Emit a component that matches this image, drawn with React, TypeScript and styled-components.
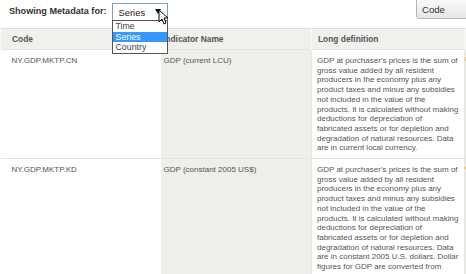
import styled, { createGlobalStyle } from 'styled-components';

const GlobalStyle = createGlobalStyle`
    html, body {
        margin: 0;
        padding: 0;
        background: #ffffff;
        overflow: hidden;
    }
    body {
        font-family: 'Liberation Sans', Arial, sans-serif;
    }
`;

const Page = styled.div`
    width: 466px;
    height: 274px;
    overflow: hidden;
    position: relative;
`;

const TopBar = styled.div`
    display: flex;
    align-items: flex-start;
    height: 28px;
`;

const Title = styled.div`
    font-size: 9.1px;
    font-weight: bold;
    color: #333;
    padding: 6px 0 0 9px;
    transform: scaleY(1.06);
`;

const SelectWrap = styled.div`
    position: relative;
    margin: 3px 0 0 5px;
    z-index: 2;
`;

const SelectBox = styled.div`
    width: 48px;
    height: 16px;
    border: 1px solid #7f9db9;
    background: #fff;
    font-size: 9.4px;
    color: #222;
    padding-left: 6px;
    box-sizing: content-box;
    display: flex;
    align-items: center;
    position: relative;
`;

const Arrow = styled.span`
    position: absolute;
    right: 6px;
    top: 5px;
    width: 0;
    height: 0;
    border-left: 3px solid transparent;
    border-right: 3px solid transparent;
    border-top: 5px solid #111;
`;

const Cursor = styled.svg`
    position: absolute;
    left: 46px;
    top: 6px;
`;

const OptionList = styled.ul`
    position: absolute;
    top: 17px;
    left: 0;
    width: 54px;
    margin: 0;
    padding: 0;
    list-style: none;
    border: 1px solid #555;
    background: #fff;
`;

const Option = styled.li<{ $active?: boolean }>`
    font-size: 8.8px;
    line-height: 10.5px;
    padding-left: 3px;
    color: ${p => (p.$active ? '#fff' : '#444')};
    background: ${p => (p.$active ? '#3399ff' : '#fff')};
`;

const SortBox = styled.div`
    margin: -2px -10px 0 auto;
    width: 60px;
    height: 21px;
    border: 1px solid #b5b5b5;
    border-radius: 0 0 0 3px;
    background: linear-gradient(#fafafa, #e6e6e6);
    font-size: 9.6px;
    color: #333;
    padding: 5px 0 0 5px;
    box-sizing: border-box;
`;

const Table = styled.table`
    border-collapse: collapse;
    table-layout: fixed;
    width: 480px;
    border-top: 1px solid #dcdcd8;
`;

const HeadCell = styled.th<{ $w: number; $pad: number }>`
    width: ${p => p.$w}px;
    height: 21px;
    background: #f0f0ed;
    text-align: left;
    font-size: 8.4px;
    font-weight: bold;
    color: #555;
    padding: 0 0 0 ${p => p.$pad}px;
    border-left: 1px solid #fafaf8;
    box-sizing: border-box;
`;

const Row = styled.tr`
    border-top: 1px solid #e4e4e0;
`;

const Cell = styled.td<{ $shade?: boolean; $pad: number }>`
    vertical-align: top;
    background: ${p => (p.$shade ? '#eeeeea' : '#ffffff')};
    padding: 6px 0 5px ${p => p.$pad}px;
    font-size: 8px;
    color: #555;
    overflow: hidden;
    white-space: nowrap;
`;

const DefCell = styled.td`
    vertical-align: top;
    background: #ffffff;
    padding: 6px 0 5px 5px;
    font-size: 8px;
    color: #555;
    overflow: hidden;
    border-left: 1px solid #e4e4e0;
    border-right: 1px solid #e4e4e0;
`;

const Line = styled.span`
    display: block;
    line-height: 9.7px;
    white-space: nowrap;
`;

const Mark = styled.span`
    display: block;
    width: 3px;
    height: 4px;
    margin-top: 1px;
    background: #f2c230;
    border-radius: 1px;
`;

const rows = [
    {
        code: 'NY.GDP.MKTP.CN',
        name: 'GDP (current LCU)',
        lines: [
            "GDP at purchaser's prices is the sum of",
            'gross value added by all resident',
            'producers in the economy plus any',
            'product taxes and minus any subsidies',
            'not included in the value of the',
            'products. It is calculated without making',
            'deductions for depreciation of',
            'fabricated assets or for depletion and',
            'degradation of natural resources. Data',
            'are in current local currency.',
        ],
    },
    {
        code: 'NY.GDP.MKTP.KD',
        name: 'GDP (constant 2005 US$)',
        lines: [
            "GDP at purchaser's prices is the sum of",
            'gross value added by all resident',
            'producers in the economy plus any',
            'product taxes and minus any subsidies',
            'not included in the value of the',
            'products. It is calculated without making',
            'deductions for depreciation of',
            'fabricated assets or for depletion and',
            'degradation of natural resources. Data',
            'are in constant 2005 U.S. dollars. Dollar',
            'figures for GDP are converted from',
            'domestic currencies using 2005 official',
            'exchange rates.',
        ],
    },
];

export default function App() {
    return (
        <Page>
            <GlobalStyle />
            <TopBar>
                <Title>Showing Metadata for:</Title>
                <SelectWrap>
                    <SelectBox>
                        Series
                        <Arrow />
                    </SelectBox>
                    <OptionList>
                        <Option>Time</Option>
                        <Option $active>Series</Option>
                        <Option>Country</Option>
                    </OptionList>
                    <Cursor width="10" height="16" viewBox="0 0 10 16">
                        <path d="M1 1 L1 13 L4 10 L6 15 L8 14 L6 9 L10 9 Z" fill="#fff" stroke="#000" strokeWidth="1" />
                    </Cursor>
                </SelectWrap>
                <SortBox>Code</SortBox>
            </TopBar>
            <Table>
                <thead>
                    <tr>
                        <HeadCell $w={160} $pad={11}>Code</HeadCell>
                        <HeadCell $w={151} $pad={2}>Indicator Name</HeadCell>
                        <HeadCell $w={153} $pad={6}>Long definition</HeadCell>
                        <HeadCell $w={16} $pad={0}></HeadCell>
                    </tr>
                </thead>
                <tbody>
                    {rows.map(r => (
                        <Row key={r.code}>
                            <Cell $pad={11}>{r.code}</Cell>
                            <Cell $shade $pad={3}>{r.name}</Cell>
                            <DefCell>
                                {r.lines.map(l => (
                                    <Line key={l}>{l}</Line>
                                ))}
                            </DefCell>
                            <Cell $shade $pad={0}>
                                <Mark />
                            </Cell>
                        </Row>
                    ))}
                </tbody>
            </Table>
        </Page>
    );
}
